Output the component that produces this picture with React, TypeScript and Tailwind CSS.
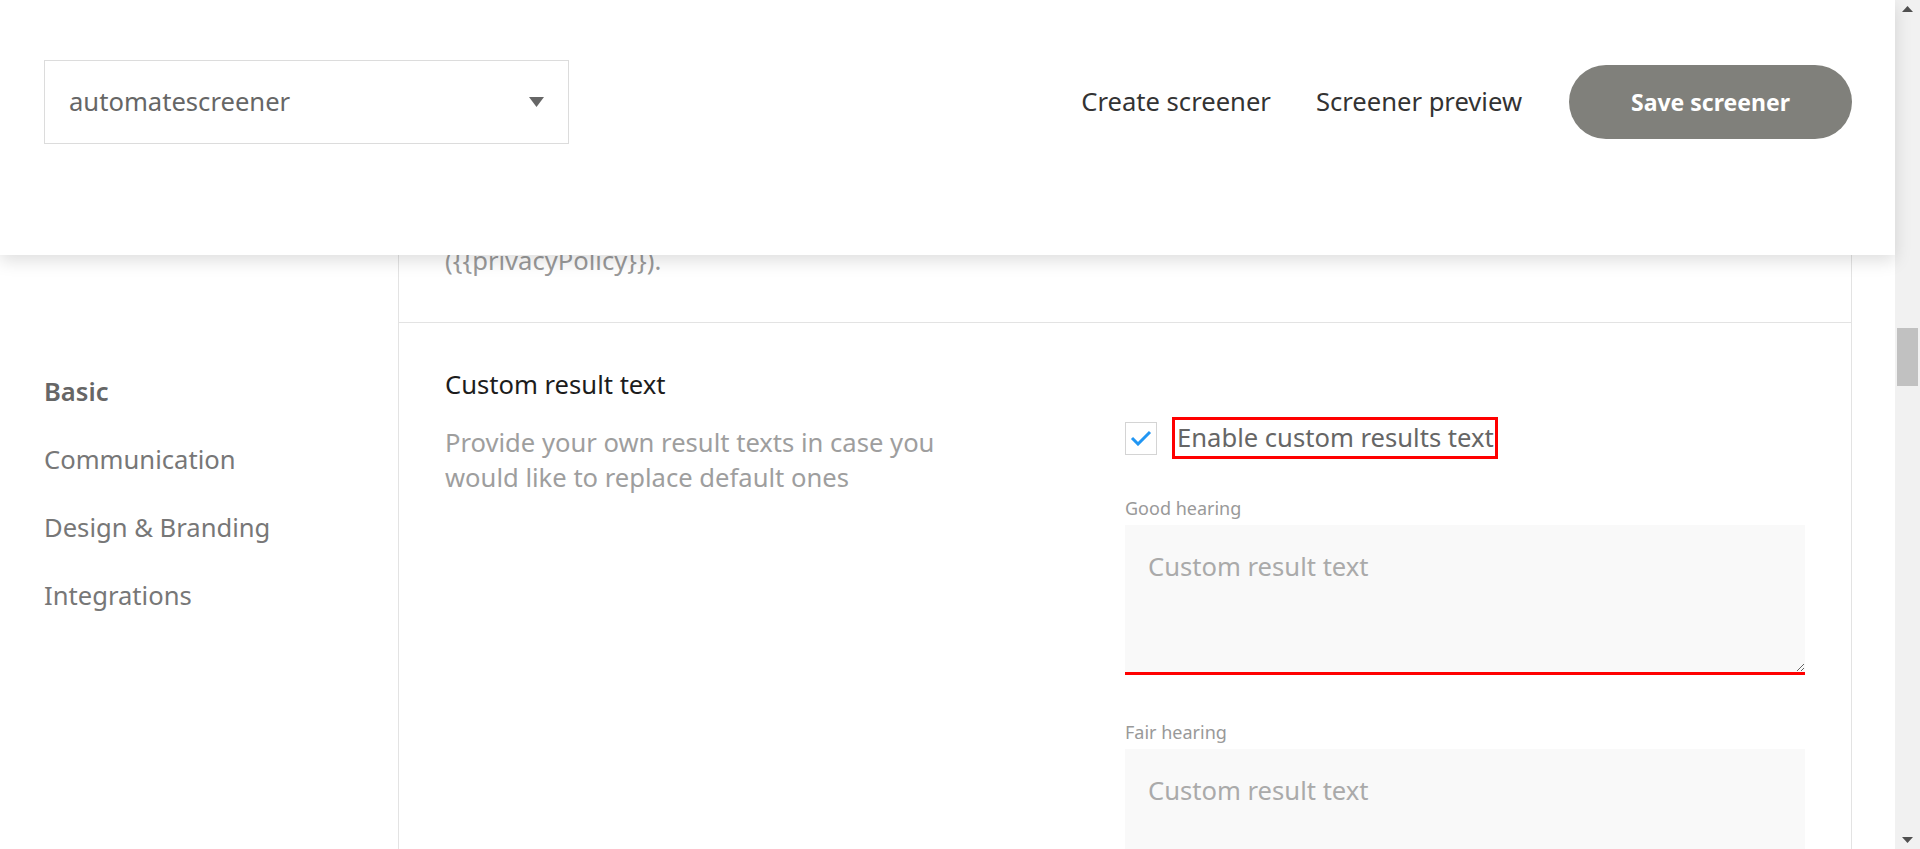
const navItems = [
  { label: "Basic", active: true },
  { label: "Communication", active: false },
  { label: "Design & Branding", active: false },
  { label: "Integrations", active: false },
];

const resultFields = [
  { label: "Good hearing", error: true },
  { label: "Fair hearing", error: false },
];

function Header() {
  return (
    <header className="absolute left-0 right-[25px] top-0 z-10 h-[255px] bg-white shadow-[0_6px_16px_rgba(0,0,0,0.13)]">
      <div className="flex items-center justify-between pl-[44px] pr-[43px] pt-[60px]">
        <div className="flex h-[84px] w-[525px] items-center justify-between border border-[#dcdcdc] pl-[24px] pr-[24px]">
          <span className="text-[25.6px] text-[#666]">automatescreener</span>
          <svg width="15" height="10" viewBox="0 0 15 10" aria-hidden>
            <polygon points="0,0 15,0 7.5,10" fill="#666" />
          </svg>
        </div>
        <nav className="flex items-center">
          <a className="text-[25.6px] text-[#333]">Create screener</a>
          <a className="ml-[45px] text-[25.6px] text-[#333]">Screener preview</a>
          <button className="ml-[47px] flex h-[74px] w-[283px] items-center justify-center rounded-full bg-[#80807b] text-[23px] font-bold text-white">
            Save screener
          </button>
        </nav>
      </div>
    </header>
  );
}

function Scrollbar() {
  return (
    <div className="relative flex h-full w-[25px] shrink-0 flex-col items-center bg-[#f1f1f1]">
      <svg className="mt-[6px]" width="11" height="6" viewBox="0 0 11 6" aria-hidden>
        <polygon points="5.5,0 11,6 0,6" fill="#505050" />
      </svg>
      <div className="mt-[316px] h-[58px] w-[21px] bg-[#c1c1c1]" />
      <div className="flex-1" />
      <svg className="mb-[6px]" width="11" height="6" viewBox="0 0 11 6" aria-hidden>
        <polygon points="0,0 11,0 5.5,6" fill="#505050" />
      </svg>
    </div>
  );
}

export default function App() {
  return (
    <div className="relative flex h-[849px] overflow-hidden bg-white font-['Noto_Sans',sans-serif]">
      <Header />
      <div className="flex flex-1">
        <aside className="w-[399px] shrink-0 border-r border-[#e3e3e3] pl-[44px] pt-[374px]">
          <ul className="flex flex-col gap-[32px]">
            {navItems.map((item) => (
              <li
                key={item.label}
                className={
                  item.active
                    ? "text-[25.6px] font-semibold leading-[36px] text-[#666]"
                    : "text-[25.6px] leading-[36px] text-[#777]"
                }
              >
                {item.label}
              </li>
            ))}
          </ul>
        </aside>

        <main className="w-[1453px] shrink-0 border-r border-[#e3e3e3]">
          <section className="border-b border-[#e3e3e3] px-[46px] pb-[44px] pt-[208px]">
            <p className="text-[25.6px] leading-[35px] text-[#999]">
              I agree to the processing of my data according to the
              <br />
              ({"{{"}privacyPolicy{"}}"}).
            </p>
          </section>

          <section className="grid grid-cols-2 px-[46px] pt-[45px]">
            <div>
              <h3 className="text-[25.6px] leading-[34px] text-[#1c1c1c]">Custom result text</h3>
              <p className="mt-[23px] max-w-[520px] text-[25.6px] leading-[35px] text-[#9e9e9e]">
                Provide your own result texts in case you would like to replace default ones
              </p>
            </div>

            <div className="pt-[49px]">
              <label className="flex items-center">
                <span className="flex h-[33px] w-[32px] items-center justify-center border border-[#d4d4d4] bg-white">
                  <svg width="22" height="16" viewBox="0 0 22 16" aria-hidden>
                    <polyline
                      points="2,8 8,14 20,2"
                      fill="none"
                      stroke="#2196f3"
                      strokeWidth="3"
                    />
                  </svg>
                </span>
                <span className="ml-[15px] border-[3px] border-[#ff0000] pl-[2px] pr-[1px] text-[25.6px] leading-[36px] text-[#666]">
                  Enable custom results text
                </span>
              </label>

              {resultFields.map((field, i) => (
                <div key={field.label} className={i === 0 ? "mt-[37px]" : "mt-[45px]"}>
                  <div className="text-[18px] leading-[24px] text-[#999]">{field.label}</div>
                  <textarea
                    placeholder="Custom result text"
                    className={
                      field.error
                        ? "mt-[5px] block h-[150px] w-full border-b-[3px] border-[#ff0000] bg-[#f9f9f9] px-[23px] pt-[25px] text-[25.6px] leading-[34px] text-[#555] outline-none placeholder:text-[#aaa]"
                        : "mt-[5px] block h-[150px] w-full bg-[#f9f9f9] px-[23px] pt-[25px] text-[25.6px] leading-[34px] text-[#555] outline-none placeholder:text-[#aaa]"
                    }
                  />
                </div>
              ))}
            </div>
          </section>
        </main>
        <div className="flex-1" />
      </div>
      <Scrollbar />
    </div>
  );
}
